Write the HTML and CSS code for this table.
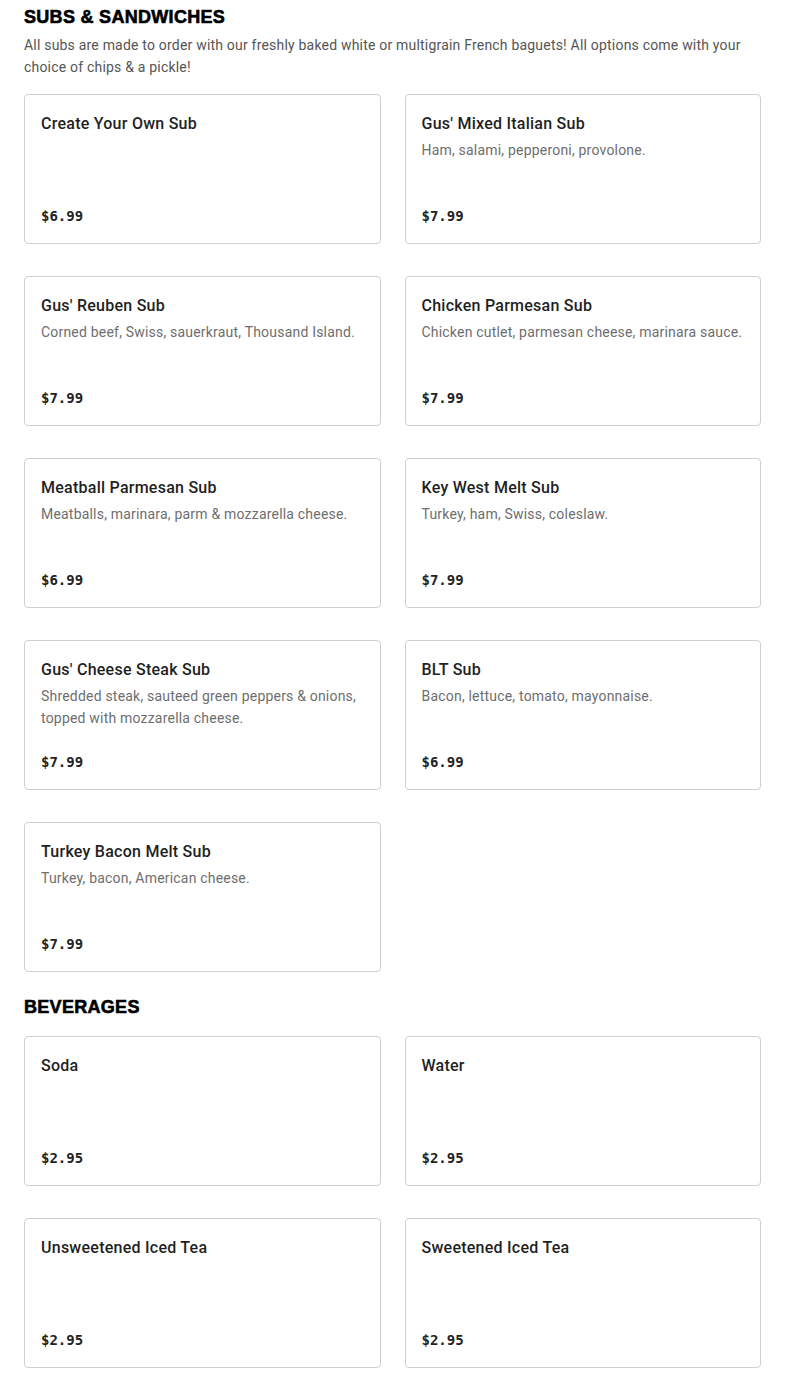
FILE: index.html
```html
<!DOCTYPE html>
<html>
<head>
<meta charset="utf-8">
<link rel="stylesheet" href="styles.css">
</head>
<body>
<main class="menu">
  <section class="section">
    <h2 class="section-title">SUBS &amp; SANDWICHES</h2>
    <p class="section-desc">All subs are made to order with our freshly baked white or multigrain French baguets! All options come with your choice of chips &amp; a pickle!</p>
    <div class="grid">
      <div class="card"><h3 class="item-name">Create Your Own Sub</h3><div class="price">$6.99</div></div>
      <div class="card"><h3 class="item-name">Gus' Mixed Italian Sub</h3><p class="item-desc">Ham, salami, pepperoni, provolone.</p><div class="price">$7.99</div></div>
      <div class="card"><h3 class="item-name">Gus' Reuben Sub</h3><p class="item-desc">Corned beef, Swiss, sauerkraut, Thousand Island.</p><div class="price">$7.99</div></div>
      <div class="card"><h3 class="item-name">Chicken Parmesan Sub</h3><p class="item-desc">Chicken cutlet, parmesan cheese, marinara sauce.</p><div class="price">$7.99</div></div>
      <div class="card"><h3 class="item-name">Meatball Parmesan Sub</h3><p class="item-desc">Meatballs, marinara, parm &amp; mozzarella cheese.</p><div class="price">$6.99</div></div>
      <div class="card"><h3 class="item-name">Key West Melt Sub</h3><p class="item-desc">Turkey, ham, Swiss, coleslaw.</p><div class="price">$7.99</div></div>
      <div class="card"><h3 class="item-name">Gus' Cheese Steak Sub</h3><p class="item-desc">Shredded steak, sauteed green peppers &amp; onions, topped with mozzarella cheese.</p><div class="price">$7.99</div></div>
      <div class="card"><h3 class="item-name">BLT Sub</h3><p class="item-desc">Bacon, lettuce, tomato, mayonnaise.</p><div class="price">$6.99</div></div>
      <div class="card"><h3 class="item-name">Turkey Bacon Melt Sub</h3><p class="item-desc">Turkey, bacon, American cheese.</p><div class="price">$7.99</div></div>
    </div>
  </section>
  <section class="section">
    <h2 class="section-title">BEVERAGES</h2>
    <div class="grid">
      <div class="card"><h3 class="item-name">Soda</h3><div class="price">$2.95</div></div>
      <div class="card"><h3 class="item-name">Water</h3><div class="price">$2.95</div></div>
      <div class="card"><h3 class="item-name">Unsweetened Iced Tea</h3><div class="price">$2.95</div></div>
      <div class="card"><h3 class="item-name">Sweetened Iced Tea</h3><div class="price">$2.95</div></div>
    </div>
  </section>
</main>
</body>
</html>
```

FILE: styles.css
```css
* { box-sizing: border-box; }
html, body { margin: 0; padding: 0; background: #fff; }
body {
  font-family: "Roboto", "Liberation Sans", sans-serif;
  color: #222;
}
.menu {
  padding: 5px 24px 0 24px;
}
.section { margin-bottom: 23px; }
.section-title {
  margin: 0;
  font-family: "Liberation Sans", "Arial", sans-serif;
  font-weight: 700;
  font-size: 18px;
  line-height: 24px;
  color: #000;
  letter-spacing: 0.3px;
  -webkit-text-stroke: 0.6px #000;
}
.section-desc {
  margin: 5px 0 16px 0;
  font-size: 14px;
  line-height: 22px;
  color: #555;
  letter-spacing: 0.2px;
}
.section-title + .grid { margin-top: 17px; }
.grid {
  display: grid;
  grid-template-columns: 1fr 1fr;
  column-gap: 24px;
  row-gap: 32px;
}
.card {
  height: 150px;
  border: 1px solid #cfcfcf;
  border-radius: 4px;
  padding: 16px;
  display: flex;
  flex-direction: column;
}
.item-name {
  margin: 1px 0 0 0;
  font-size: 16px;
  line-height: 24px;
  font-weight: 500;
  color: #1f1f1f;
  letter-spacing: 0.25px;
}
.item-desc {
  margin: 3px 0 0 0;
  font-size: 14px;
  line-height: 22px;
  color: #6e6e6e;
  letter-spacing: 0.2px;
}
.price {
  margin-top: auto;
  font-family: "DejaVu Sans Mono", "Liberation Mono", monospace;
  font-weight: 700;
  font-size: 14px;
  line-height: 22px;
  color: #222;
}
```
